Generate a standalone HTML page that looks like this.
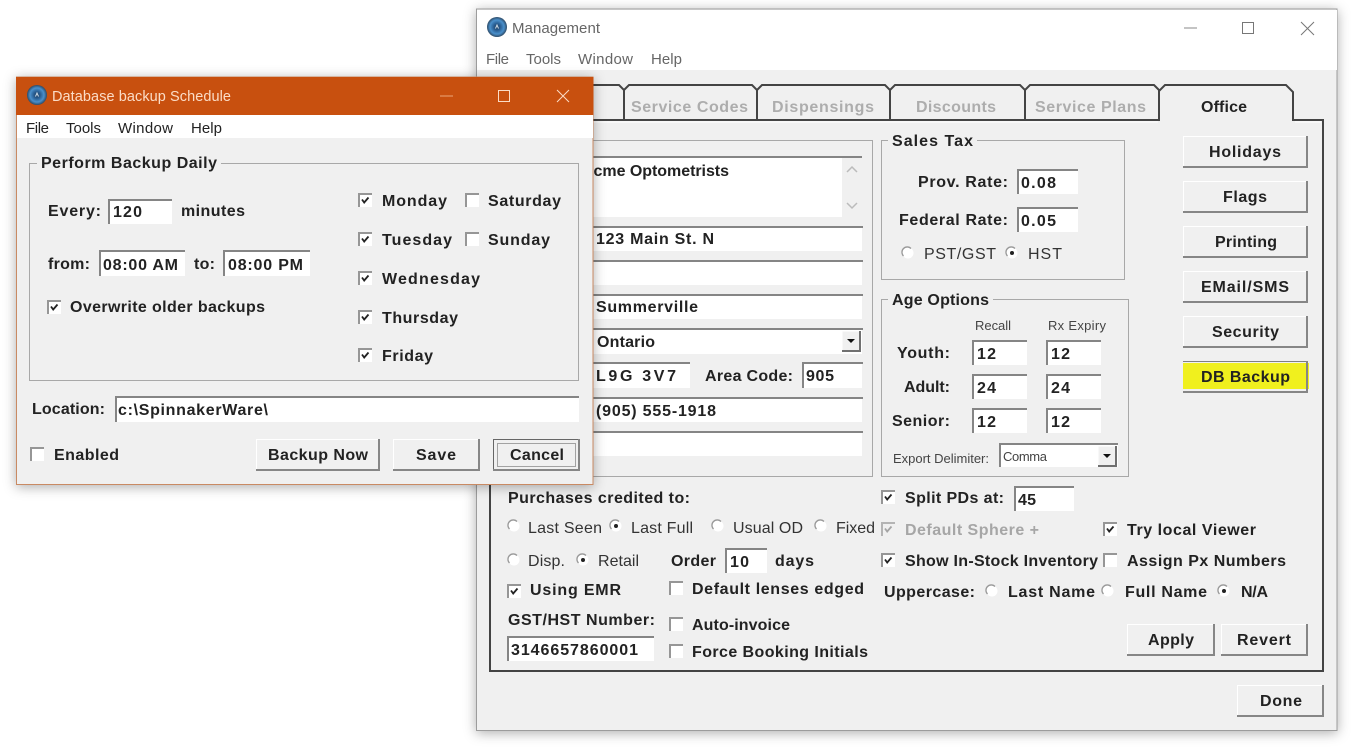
<!DOCTYPE html>
<html lang="en"><head><meta charset="utf-8"><title>Database backup Schedule</title>
<style>
html,body{margin:0;padding:0;background:#fff;width:1355px;height:747px;overflow:hidden}
svg{display:block}
text{font-family:"Liberation Sans",Arial,sans-serif;font-size:16px;font-weight:700;fill:#222;white-space:pre}
.r{font-weight:400;fill:#333;font-size:16px}
.w{font-weight:400;fill:#fbdcc6;font-size:14.5px}
.m{font-weight:400;fill:#222;font-size:15px}
.mg{font-weight:400;fill:#666;font-size:15px}
.s{font-weight:400;fill:#444;font-size:13px}
.d{fill:#adadad}
.dl{fill:#a6a6a6}
.win{filter:drop-shadow(0 2px 6px rgba(0,0,0,.32))}
.fw{fill:#fff}
.fe{fill:none;stroke:#858585;stroke-width:2}
.gb{fill:none;stroke:#a8a8a8;stroke-width:1}
.bt{fill:#f0f0f0}
.bh{fill:none;stroke:#fff;stroke-width:1}
.bs{fill:none;stroke:#868686;stroke-width:2}
.dk{fill:none;stroke:#444;stroke-width:2}
</style></head><body>
<svg width="1355" height="747" viewBox="0 0 1355 747" xmlns="http://www.w3.org/2000/svg">
<defs>
<radialGradient id="ig"><stop offset="0" stop-color="#1c3a5c"/><stop offset=".35" stop-color="#2a5f94"/><stop offset=".7" stop-color="#4a90cc"/><stop offset="1" stop-color="#2d4a66"/></radialGradient>
<g id="ck"><rect width="14" height="14" fill="#fff"/><path d="M1 14V1H14" fill="none" stroke="#969696" stroke-width="2"/><path d="M4 6.5L6.2 9.5L10.5 4.5" fill="none" stroke="#222" stroke-width="1.8"/></g>
<g id="un"><rect width="14" height="14" fill="#fff"/><path d="M1 14V1H14" fill="none" stroke="#969696" stroke-width="2"/></g>
<g id="dc"><rect width="14" height="14" fill="#f0f0f0"/><path d="M1 14V1H14" fill="none" stroke="#b4b4b4" stroke-width="2"/><path d="M4 6.5L6.2 9.5L10.5 4.5" fill="none" stroke="#a4a4a4" stroke-width="1.8"/></g>
<g id="ra"><circle cx="6" cy="6" r="5.5" fill="#fff"/><path d="M1.5 9A5.2 5.2 0 0 1 9 1.5" fill="none" stroke="#999" stroke-width="1.3"/></g>
<g id="rb"><circle cx="6" cy="6" r="5.5" fill="#fff"/><path d="M1.5 9A5.2 5.2 0 0 1 9 1.5" fill="none" stroke="#999" stroke-width="1.3"/><circle cx="6" cy="6" r="2" fill="#222"/></g>
<g id="ic"><circle cx="0" cy="0" r="10" fill="url(#ig)"/><path d="M-1.5 1.5L0 -2L1.5 1.5" fill="none" stroke="#cfdeea" stroke-width="1"/></g>
<g id="db"><rect width="18" height="20" fill="#f0f0f0"/><path d="M0 20V0H18" fill="none" stroke="#fff"/><path d="M18 0V20H0" fill="none" stroke="#707070" stroke-width="2"/><path d="M5 8H13L9 12Z" fill="#111"/></g>
</defs>

<!-- Management window -->
<rect class="win" x="476.5" y="9" width="860.5" height="721.5" fill="#f0f0f0" stroke="#9c9c9c"/>
<rect x="477" y="10" width="860" height="60" fill="#fff"/>
<use href="#ic" x="497" y="27"/>
<text class="mg" x="512" y="33" textLength="88">Management</text>
<path d="M1184 28H1197" stroke="#888" fill="none"/>
<rect x="1242.5" y="22.5" width="11" height="11" fill="none" stroke="#777"/>
<path d="M1301 22L1314 35M1314 22L1301 35" stroke="#777" fill="none"/>
<text class="mg" x="486" y="64" textLength="23">File</text>
<text class="mg" x="526" y="64" textLength="35">Tools</text>
<text class="mg" x="578" y="64" textLength="55">Window</text>
<text class="mg" x="651" y="64" textLength="31">Help</text>

<!-- tabs -->
<path class="dk" d="M490 120H1159V91L1165 85H1286L1293 92V120H1323V671H490V120"/>
<path d="M491 122H1158M1295 122H1321" stroke="#fff" fill="none"/>
<path d="M1161 122H1291" stroke="#f0f0f0" stroke-width="4" fill="none"/>
<path class="dk" d="M490 85H619L624 90V120M624 90L629 85H752L757 90V120M757 90L762 85H885L890 90V120M890 90L895 85H1020L1025 90V120M1025 90L1030 85H1154L1159 90"/>
<text class="d" x="631" y="112" textLength="117">Service Codes</text>
<text class="d" x="772" y="112" textLength="102">Dispensings</text>
<text class="d" x="916" y="112" textLength="80">Discounts</text>
<text class="d" x="1035" y="112" textLength="111">Service Plans</text>
<text x="1201" y="112" textLength="46">Office</text>

<!-- address group -->
<rect class="gb" x="500.5" y="140.5" width="372" height="336"/>
<rect class="fw" x="560" y="157" width="282" height="60"/>
<rect x="842" y="158" width="20" height="59" fill="#f0f0f0"/>
<path d="M560 157H862" stroke="#858585" stroke-width="2" fill="none"/>
<path d="M847 172L852 167L857 172M847 203L852 208L857 203" stroke="#bbb" stroke-width="1.5" fill="none"/>
<text x="582" y="176" textLength="147">Acme Optometrists</text>
<rect class="fw" x="560" y="226" width="302" height="25"/><path class="fe" d="M560 227H863"/>
<text x="596" y="244" textLength="118">123 Main St. N</text>
<rect class="fw" x="560" y="260" width="302" height="25"/><path class="fe" d="M560 261H863"/>
<rect class="fw" x="560" y="294" width="302" height="25"/><path class="fe" d="M560 295H863"/>
<text x="596" y="312" textLength="102">Summerville</text>
<rect class="fw" x="560" y="328" width="302" height="26"/><path class="fe" d="M560 329H863"/>
<text x="597" y="347" textLength="58">Ontario</text>
<use href="#db" x="842" y="331"/>
<rect class="fw" x="560" y="362" width="130" height="26"/><path class="fe" d="M560 363H690"/>
<text x="596" y="381" textLength="80">L9G 3V7</text>
<text x="705" y="381" textLength="88">Area Code:</text>
<rect class="fw" x="802" y="362" width="60" height="26"/><path class="fe" d="M803 388V363H863"/>
<text x="806" y="381" textLength="28">905</text>
<rect class="fw" x="560" y="397" width="302" height="25"/><path class="fe" d="M560 398H863"/>
<text x="596" y="416" textLength="120">(905) 555-1918</text>
<rect class="fw" x="560" y="431" width="302" height="25"/><path class="fe" d="M560 432H863"/>

<!-- sales tax -->
<rect x="881.5" y="140.5" width="243" height="139" class="gb"/>
<rect x="888" y="134" width="89" height="12" fill="#f0f0f0"/>
<text x="892" y="146" textLength="81">Sales Tax</text>
<text x="918" y="187" textLength="90">Prov. Rate:</text>
<rect class="fw" x="1017" y="169" width="61" height="25"/><path class="fe" d="M1018 194V170H1078"/>
<text x="1021" y="188" textLength="35">0.08</text>
<text x="899" y="225" textLength="109">Federal Rate:</text>
<rect class="fw" x="1017" y="207" width="61" height="25"/><path class="fe" d="M1018 232V208H1078"/>
<text x="1021" y="226" textLength="35">0.05</text>
<use href="#ra" x="902" y="247"/>
<text class="r" x="924" y="259" textLength="72">PST/GST</text>
<use href="#rb" x="1006" y="247"/>
<text class="r" x="1028" y="259" textLength="34">HST</text>

<!-- age options -->
<rect x="881.5" y="299.5" width="247" height="177" class="gb"/>
<rect x="888" y="292" width="105" height="12" fill="#f0f0f0"/>
<text x="892" y="305" textLength="97">Age Options</text>
<text class="s" x="975" y="330" textLength="36">Recall</text>
<text class="s" x="1048" y="330" textLength="58">Rx Expiry</text>
<text x="897" y="358" textLength="53">Youth:</text>
<text x="904" y="392" textLength="46">Adult:</text>
<text x="892" y="426" textLength="58">Senior:</text>
<rect class="fw" x="972" y="340" width="55" height="25"/><path class="fe" d="M973 365V341H1027"/>
<rect class="fw" x="1046" y="340" width="55" height="25"/><path class="fe" d="M1047 365V341H1101"/>
<rect class="fw" x="972" y="374" width="55" height="25"/><path class="fe" d="M973 399V375H1027"/>
<rect class="fw" x="1046" y="374" width="55" height="25"/><path class="fe" d="M1047 399V375H1101"/>
<rect class="fw" x="972" y="408" width="55" height="25"/><path class="fe" d="M973 433V409H1027"/>
<rect class="fw" x="1046" y="408" width="55" height="25"/><path class="fe" d="M1047 433V409H1101"/>
<text x="977" y="359" textLength="19">12</text><text x="1051" y="359" textLength="19">12</text>
<text x="977" y="393" textLength="19">24</text><text x="1051" y="393" textLength="19">24</text>
<text x="977" y="427" textLength="19">12</text><text x="1051" y="427" textLength="19">12</text>
<text class="s" x="893" y="463" textLength="96">Export Delimiter:</text>
<rect class="fw" x="999" y="443" width="119" height="24"/><path class="fe" d="M1000 467V444H1118"/>
<text class="s" x="1003" y="461" textLength="44">Comma</text>
<use href="#db" x="1098" y="446"/>

<!-- right buttons -->
<rect class="bt" x="1183" y="136" width="125" height="32"/><path class="bh" d="M1183.5 167V136.5H1307"/><path class="bs" d="M1183 167H1307V136"/>
<text x="1209" y="157" textLength="72">Holidays</text>
<rect class="bt" x="1183" y="181" width="125" height="32"/><path class="bh" d="M1183.5 212V181.5H1307"/><path class="bs" d="M1183 212H1307V181"/>
<text x="1223" y="202" textLength="44">Flags</text>
<rect class="bt" x="1183" y="226" width="125" height="32"/><path class="bh" d="M1183.5 257V226.5H1307"/><path class="bs" d="M1183 257H1307V226"/>
<text x="1215" y="247" textLength="62">Printing</text>
<rect class="bt" x="1183" y="271" width="125" height="32"/><path class="bh" d="M1183.5 302V271.5H1307"/><path class="bs" d="M1183 302H1307V271"/>
<text x="1201" y="292" textLength="88">EMail/SMS</text>
<rect class="bt" x="1183" y="316" width="125" height="32"/><path class="bh" d="M1183.5 347V316.5H1307"/><path class="bs" d="M1183 347H1307V316"/>
<text x="1212" y="337" textLength="67">Security</text>
<rect x="1183" y="361" width="125" height="32" fill="#f0f0f0"/>
<rect x="1183" y="363" width="126" height="26" fill="#f0f01e"/>
<path d="M1183 361.5H1308" stroke="#808080" fill="none"/>
<path class="bs" d="M1183 392H1307V361"/>
<text x="1201" y="382" textLength="89">DB Backup</text>

<!-- lower options -->
<text x="508" y="503" textLength="182">Purchases credited to:</text>
<use href="#ra" x="508" y="520"/><text class="r" x="528" y="533" textLength="74">Last Seen</text>
<use href="#rb" x="610" y="520"/><text class="r" x="631" y="533" textLength="62">Last Full</text>
<use href="#ra" x="712" y="520"/><text class="r" x="733" y="533" textLength="70">Usual OD</text>
<use href="#ra" x="815" y="520"/><text class="r" x="836" y="533" textLength="39">Fixed</text>
<use href="#ra" x="508" y="554"/><text class="r" x="528" y="566" textLength="37">Disp.</text>
<use href="#rb" x="577" y="554"/><text class="r" x="598" y="566" textLength="41">Retail</text>
<text x="671" y="566" textLength="45">Order</text>
<rect class="fw" x="725" y="548" width="42" height="25"/><path class="fe" d="M726 573V549H767"/>
<text x="730" y="567" textLength="19">10</text>
<text x="775" y="566" textLength="39">days</text>
<use href="#ck" x="507" y="584"/><text x="530" y="595" textLength="91">Using EMR</text>
<use href="#un" x="669" y="581"/><text x="692" y="594" textLength="172">Default lenses edged</text>
<text x="508" y="625" textLength="147">GST/HST Number:</text>
<rect class="fw" x="507" y="636" width="147" height="25"/><path class="fe" d="M508 661V637H654"/>
<text x="511" y="655" textLength="127">3146657860001</text>
<use href="#un" x="669" y="617"/><text x="692" y="630" textLength="98">Auto-invoice</text>
<use href="#un" x="669" y="644"/><text x="692" y="657" textLength="176">Force Booking Initials</text>

<use href="#ck" x="881" y="490"/><text x="905" y="503" textLength="99">Split PDs at:</text>
<rect class="fw" x="1014" y="486" width="60" height="25"/><path class="fe" d="M1015 511V487H1074"/>
<text x="1018" y="505" textLength="18">45</text>
<use href="#dc" x="881" y="522"/><text class="dl" x="905" y="535" textLength="134">Default Sphere +</text>
<use href="#ck" x="1103" y="522"/><text x="1127" y="535" textLength="129">Try local Viewer</text>
<use href="#ck" x="881" y="553"/><text x="905" y="566" textLength="193">Show In-Stock Inventory</text>
<use href="#un" x="1103" y="553"/><text x="1127" y="566" textLength="159">Assign Px Numbers</text>
<text x="884" y="597" textLength="91">Uppercase:</text>
<use href="#ra" x="986" y="585"/><text x="1008" y="597" textLength="87">Last Name</text>
<use href="#ra" x="1102" y="585"/><text x="1125" y="597" textLength="82">Full Name</text>
<use href="#rb" x="1218" y="585"/><text x="1241" y="597" textLength="27">N/A</text>

<rect class="bt" x="1127" y="624" width="88" height="32"/><path class="bh" d="M1127.5 655V624.5H1214"/><path class="bs" d="M1127 655H1214V624"/>
<text x="1148" y="645" textLength="46">Apply</text>
<rect class="bt" x="1221" y="624" width="87" height="32"/><path class="bh" d="M1221.5 655V624.5H1307"/><path class="bs" d="M1221 655H1307V624"/>
<text x="1237" y="645" textLength="54">Revert</text>
<rect class="bt" x="1237" y="685" width="87" height="32"/><path class="bh" d="M1237.5 716V685.5H1323"/><path class="bs" d="M1237 716H1323V685"/>
<text x="1260" y="706" textLength="42">Done</text>

<!-- Backup window -->
<rect class="win" x="16.5" y="77" width="576.5" height="407.5" fill="#f0f0f0" stroke="#c98a63"/>
<rect x="16" y="77" width="577.5" height="38" fill="#c8500f"/>
<rect x="17" y="115" width="576" height="23" fill="#fff"/>
<use href="#ic" x="37" y="95"/>
<text class="w" x="52" y="101" textLength="179">Database backup Schedule</text>
<path d="M440 96H453" stroke="#eba67a" fill="none"/>
<rect x="498.5" y="90.5" width="11" height="11" fill="none" stroke="#fbdcc6"/>
<path d="M557 90L569 102M569 90L557 102" stroke="#fbdcc6" fill="none"/>
<text class="m" x="26" y="133" textLength="23">File</text>
<text class="m" x="66" y="133" textLength="35">Tools</text>
<text class="m" x="118" y="133" textLength="55">Window</text>
<text class="m" x="191" y="133" textLength="31">Help</text>

<rect class="gb" x="29.5" y="163.5" width="549" height="217"/>
<rect x="37" y="156" width="184" height="12" fill="#f0f0f0"/>
<text x="41" y="168" textLength="176">Perform Backup Daily</text>
<text x="48" y="216" textLength="53">Every:</text>
<rect class="fw" x="108" y="199" width="64" height="25"/><path class="fe" d="M109 224V200H172"/>
<text x="113" y="217" textLength="29">120</text>
<text x="181" y="216" textLength="64">minutes</text>
<text x="48" y="269" textLength="42">from:</text>
<rect class="fw" x="99" y="250" width="86" height="26"/><path class="fe" d="M100 276V251H185"/>
<text x="103" y="270" textLength="75">08:00 AM</text>
<text x="194" y="269" textLength="21">to:</text>
<rect class="fw" x="223" y="250" width="87" height="26"/><path class="fe" d="M224 276V251H310"/>
<text x="228" y="270" textLength="75">08:00 PM</text>
<use href="#ck" x="47" y="300"/><text x="70" y="312" textLength="195">Overwrite older backups</text>
<use href="#ck" x="358" y="193"/><text x="382" y="206" textLength="65">Monday</text>
<use href="#un" x="465" y="193"/><text x="488" y="206" textLength="73">Saturday</text>
<use href="#ck" x="358" y="232"/><text x="382" y="245" textLength="70">Tuesday</text>
<use href="#un" x="465" y="232"/><text x="488" y="245" textLength="62">Sunday</text>
<use href="#ck" x="358" y="271"/><text x="382" y="284" textLength="98">Wednesday</text>
<use href="#ck" x="358" y="310"/><text x="382" y="323" textLength="76">Thursday</text>
<use href="#ck" x="358" y="348"/><text x="382" y="361" textLength="51">Friday</text>
<text x="32" y="414" textLength="73">Location:</text>
<rect class="fw" x="115" y="396" width="464" height="26"/><path class="fe" d="M116 422V397H579"/>
<text x="118" y="415" textLength="150">c:\SpinnakerWare\</text>
<use href="#un" x="30" y="447"/><text x="54" y="460" textLength="65">Enabled</text>
<rect class="bt" x="256" y="439" width="124" height="32"/><path class="bh" d="M256.5 470V439.5H379"/><path class="bs" d="M256 470H379V439"/>
<text x="268" y="460" textLength="100">Backup Now</text>
<rect class="bt" x="393" y="439" width="87" height="32"/><path class="bh" d="M393.5 470V439.5H479"/><path class="bs" d="M393 470H479V439"/>
<text x="416" y="460" textLength="40">Save</text>
<rect class="bt" x="493.5" y="439.5" width="86" height="31" stroke="#666"/>
<path class="bs" d="M493 470H579V439"/>
<rect x="497.5" y="443.5" width="78" height="23" fill="none" stroke="#555" stroke-dasharray="1 1"/>
<text x="510" y="460" textLength="54">Cancel</text>
</svg>
</body></html>
